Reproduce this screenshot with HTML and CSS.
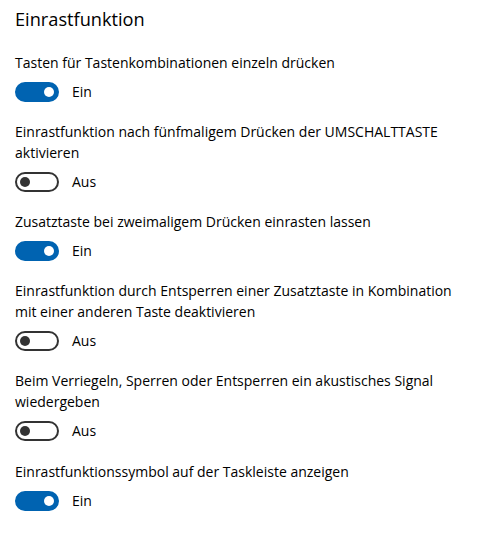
FILE: index.html
```html
<!DOCTYPE html>
<html lang="de">
<head>
<meta charset="utf-8">
<title>Einrastfunktion</title>
<link rel="stylesheet" href="styles.css">
</head>
<body>
<main class="page">
  <h1 class="title">Einrastfunktion</h1>
  <section class="setting">
    <p class="label">Tasten für Tastenkombinationen einzeln drücken</p>
    <div class="row"><span class="toggle on"></span><span class="state">Ein</span></div>
  </section>
  <section class="setting">
    <p class="label">Einrastfunktion nach fünfmaligem Drücken der UMSCHALTTASTE<br>aktivieren</p>
    <div class="row"><span class="toggle"></span><span class="state">Aus</span></div>
  </section>
  <section class="setting">
    <p class="label">Zusatztaste bei zweimaligem Drücken einrasten lassen</p>
    <div class="row"><span class="toggle on"></span><span class="state">Ein</span></div>
  </section>
  <section class="setting">
    <p class="label">Einrastfunktion durch Entsperren einer Zusatztaste in Kombination<br>mit einer anderen Taste deaktivieren</p>
    <div class="row"><span class="toggle"></span><span class="state">Aus</span></div>
  </section>
  <section class="setting">
    <p class="label">Beim Verriegeln, Sperren oder Entsperren ein akustisches Signal<br>wiedergeben</p>
    <div class="row"><span class="toggle"></span><span class="state">Aus</span></div>
  </section>
  <section class="setting">
    <p class="label">Einrastfunktionssymbol auf der Taskleiste anzeigen</p>
    <div class="row"><span class="toggle on"></span><span class="state">Ein</span></div>
  </section>
</main>
</body>
</html>
```

FILE: styles.css
```css
html, body {
  margin: 0;
  padding: 0;
  background: #ffffff;
}
body {
  font-family: "Open Sans", "Noto Sans", sans-serif;
  color: #000000;
}
.page {
  padding: 5px 15px 0 15px;
  display: flex;
  flex-direction: column;
  gap: 19px;
}
.title {
  margin: 0;
  font-size: 18.2px;
  line-height: 28px;
  font-weight: 400;
}
.setting {
  display: flex;
  flex-direction: column;
  gap: 9px;
}
.setting:last-child {
  padding-top: 1px;
}
.label {
  margin: 0;
  font-size: 14px;
  line-height: 21px;
}
.row {
  display: flex;
  align-items: center;
  gap: 13px;
  height: 20px;
}
.toggle {
  box-sizing: border-box;
  width: 44px;
  height: 20px;
  border-radius: 10px;
  border: 2px solid #333333;
  display: flex;
  align-items: center;
  padding: 0 3px;
}
.toggle::after {
  content: "";
  width: 10px;
  height: 10px;
  border-radius: 50%;
  background: #333333;
}
.toggle.on {
  background: #0063b1;
  border-color: #0063b1;
  justify-content: flex-end;
}
.toggle.on::after {
  background: #ffffff;
}
.state {
  font-size: 14px;
  line-height: 20px;
}
```
